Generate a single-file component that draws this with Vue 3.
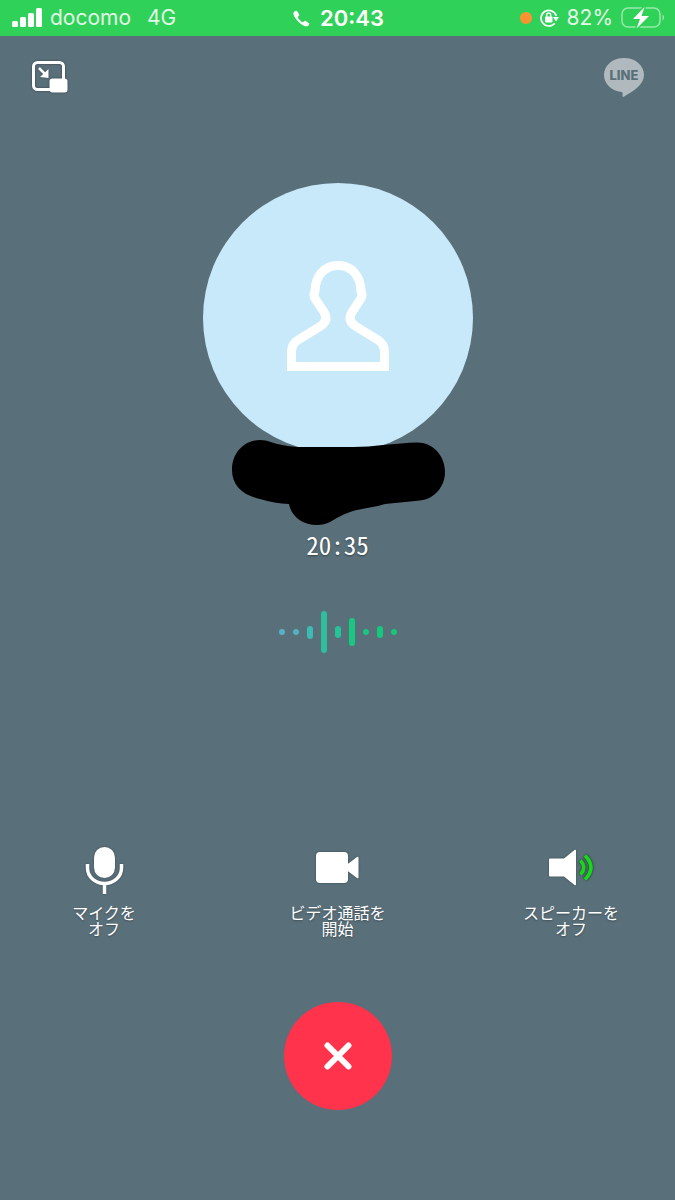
<script setup>
import { ref } from 'vue'

const carrier = ref('docomo')
const network = ref('4G')
const clock = ref('20:43')
const battery = ref(82)
const duration = ref('20:35')

// 音声波形のバー
const bars = [
  { height: 6, color: '#5aafca' },
  { height: 6, color: '#52b3c3' },
  { height: 13, color: '#3bbbb4' },
  { height: 42, color: '#2fbf9f' },
  { height: 12, color: '#22c498' },
  { height: 28, color: '#18c780' },
  { height: 6, color: '#18c680' },
  { height: 12, color: '#14c97c' },
  { height: 6, color: '#18c67c' },
]
</script>

<template>
  <div class="call">
    <header class="status-bar">
      <div class="status-left">
        <svg class="signal" width="30" height="20" viewBox="0 0 30 20" fill="#fff">
          <rect x="0" y="13" width="6" height="6" rx="1.5" />
          <rect x="8" y="9" width="6" height="10" rx="1.5" />
          <rect x="16" y="5" width="6" height="14" rx="1.5" />
          <rect x="24" y="0" width="6" height="19" rx="1.5" />
        </svg>
        <span>{{ carrier }}</span>
        <span class="network">{{ network }}</span>
      </div>
      <div class="status-center">
        <svg width="17" height="17" viewBox="0 0 17 17" fill="#fff">
          <path d="M1.2 1.8C2.2.6 3.6.3 4.300 1.300L6 4.200c.5.9.2 1.600-.8 2.400-.6.5-.5 1 0 1.700C6.400 10 7.500 11 9 11.900c.6.4 1 .4 1.500-.2.8-.9 1.500-1.200 2.300-.7l2.900 1.900c1 .7.7 1.900-.5 2.800C13.500 17 10.600 16.200 7 13.200 3.200 10 .9 6.600.5 4.300.3 3.300.6 2.500 1.200 1.800z" />
        </svg>
        <span class="clock">{{ clock }}</span>
      </div>
      <div class="status-right">
        <span class="recording-dot"></span>
        <svg width="19" height="20" viewBox="0 0 19 20">
          <path d="M14.800 15.200A7.800 7.800 0 1 1 16.300 8" fill="none" stroke="#fff" stroke-width="1.700" />
          <path d="M13 9h6l-3 4.500z" fill="#fff" />
          <rect x="5" y="8.500" width="7.500" height="6" rx="1" fill="#fff" />
          <path d="M6.700 9V7a2 2 0 0 1 4 0v2" fill="none" stroke="#fff" stroke-width="1.400" />
        </svg>
        <span class="percent">{{ battery }}%</span>
        <svg width="44" height="22" viewBox="0 0 44 22">
          <rect x="1" y="1" width="38" height="19" rx="6" fill="none" stroke="#98e9ab" stroke-width="1.500" />
          <path d="M41.500 7.500c2 .8 2 5.200 0 6z" fill="#98e9ab" />
          <path d="M23.500 0 12 12h7l-3.500 9.500L28 9h-7.500z" fill="#fff" stroke="#30d158" stroke-width="3" paint-order="stroke" />
        </svg>
      </div>
    </header>

    <nav class="toolbar">
      <button type="button" class="icon-button" aria-label="縮小">
        <svg width="38" height="36" viewBox="0 0 38 36">
          <rect x="2.500" y="2.500" width="30" height="27" rx="4" fill="none" stroke="#fff" stroke-width="3" />
          <path d="M8 8l6 6" stroke="#fff" stroke-width="2.500" />
          <path d="M17.500 18V9L9 17z" fill="#fff" />
          <rect x="18.500" y="18.500" width="18" height="14" rx="3" fill="#fff" />
        </svg>
      </button>
      <svg class="line-logo" width="42" height="42" viewBox="0 0 42 42">
        <path d="M21 1C9.500 1 1 8.500 1 18c0 8.600 7 15.500 17.300 17 1.400.2 1.500 1.200 1.200 3.200-.2 1.700.5 1.900 2 1C30 34.500 41 28 41 18 41 8.500 32.500 1 21 1z" fill="#b0b9be" />
        <text x="21" y="23" text-anchor="middle">LINE</text>
      </svg>
    </nav>

    <main class="profile">
      <div class="avatar">
        <svg width="102" height="110" viewBox="0 0 102 110">
          <path
            d="M4.500 105.500V91Q4.500 83 11 79L33 65.500Q42 60 37 51L28 37.500Q26 34 28 30C28.500 14 38 4.500 51 4.500S73.500 14 74 30Q76 34 74 37.500L65 51Q60 60 69 65.500L91 79Q97.500 83 97.500 91V105.500Z"
            fill="none"
            stroke="#fff"
            stroke-width="9"
          />
        </svg>
      </div>
      <svg class="name-mask" width="214" height="86" viewBox="0 0 214 86">
        <path d="M1 31C1 14 13 1 29 1c8 0 12 3 20 4.500 7 1.500 12 2.500 20 2.500h53c11 0 20-1 30-2 12-1 24-2.500 34-2.500 16 0 28 13 28 29.500 0 14-10 27-25 28.500l-35 3.500c-11 3.500-20 4-32 7-10 3-16 7-23 11-4 2-8 3-13 3-15 0-26-9-28-21-10-.5-19-2-29-5C11 56 1 46 1 31z" />
      </svg>
      <time class="duration">{{ duration }}</time>
      <div class="wave">
        <span
          v-for="(bar, i) in bars"
          :key="i"
          class="bar"
          :style="{ height: bar.height + 'px', background: bar.color }"
        ></span>
      </div>
    </main>

    <section class="controls">
      <button type="button" class="control">
        <svg width="52" height="52" viewBox="0 0 52 52">
          <rect x="16" y="4" width="21" height="31" rx="10.500" fill="#fff" />
          <path d="M9.500 21v4a17 15.500 0 0 0 34 0v-4M26.500 40.500V51" fill="none" stroke="#fff" stroke-width="3.500" />
        </svg>
        <span>マイクを<br />オフ</span>
      </button>
      <button type="button" class="control">
        <svg width="52" height="52" viewBox="0 0 52 52" fill="#fff">
          <rect x="5" y="9" width="32" height="31" rx="4" />
          <path d="M36 21.500l10-7.500q1.500-1 1.500 1v19q0 2-1.500 1l-10-7.500z" />
        </svg>
        <span>ビデオ通話を<br />開始</span>
      </button>
      <button type="button" class="control">
        <svg width="52" height="52" viewBox="0 0 52 52">
          <path d="M5 15.500h14L29.500 7q1.500-1 1.500 1v33q0 2-1.500 1L19 33.500H5q-1 0-1-1v-16q0-1 1-1z" fill="#fff" />
          <path d="M35.500 17.500q6.500 7 0 14M40 12.500q12 12 0 24" fill="none" stroke="#3c5a55" stroke-width="5" />
          <path d="M35.500 17.500q6.500 7 0 14M40 12.500q12 12 0 24" fill="none" stroke="#14dc14" stroke-width="3.500" />
        </svg>
        <span>スピーカーを<br />オフ</span>
      </button>
    </section>

    <button type="button" class="hang-up" aria-label="通話を終了">
      <svg width="28" height="28" viewBox="0 0 28 28">
        <path d="M3.500 3.500l21 21M24.500 3.500l-21 21" stroke="#fff" stroke-width="6" stroke-linecap="round" />
      </svg>
    </button>
  </div>
</template>

<style>
body {
  margin: 0;
  background: #596f79;
}
</style>

<style scoped>
.call {
  display: flex;
  flex-direction: column;
  box-sizing: border-box;
  min-height: 100vh;
  padding-bottom: 90px;
  background: #596f79;
  color: #fff;
  font-family: 'Noto Sans CJK JP', sans-serif;
}

svg {
  display: block;
  flex: none;
}

button {
  padding: 0;
  border: 0;
  background: none;
  color: inherit;
  font: inherit;
  cursor: pointer;
}

/* ステータスバー */
.status-bar {
  display: grid;
  grid-template-columns: 1fr auto 1fr;
  align-items: center;
  height: 36px;
  padding: 0 10px 0 12px;
  background: #30d158;
  font-family: Inter, sans-serif;
  font-size: 21px;
  line-height: 36px;
}

.status-left,
.status-center,
.status-right {
  display: flex;
  align-items: center;
}

.status-left {
  gap: 8px;
  color: #e2f9e7;
}

.network {
  margin-left: 8px;
}

.status-center {
  gap: 10px;
}

.clock {
  font-size: 22px;
  font-weight: 600;
}

.status-right {
  justify-content: flex-end;
  gap: 8px;
}

.recording-dot {
  width: 12px;
  height: 12px;
  border-radius: 50%;
  background: #ff9230;
}

.percent {
  color: #e2f9e7;
}

/* ツールバー */
.toolbar {
  display: flex;
  justify-content: space-between;
  align-items: center;
  padding: 21px 30px 0 31px;
}

.icon-button svg {
  filter: drop-shadow(0 0 1px rgba(0, 0, 0, 0.4));
}

.line-logo text {
  fill: #596f79;
  font-family: Inter, sans-serif;
  font-size: 13px;
  font-weight: 800;
}

/* 通話相手 */
.profile {
  display: flex;
  flex-direction: column;
  align-items: center;
  margin-top: 84px;
}

.avatar {
  display: flex;
  align-items: center;
  justify-content: center;
  box-sizing: border-box;
  width: 270px;
  height: 270px;
  padding-bottom: 4px;
  border-radius: 50%;
  background: #c8e9fa;
}

.name-mask {
  margin-top: -14px;
}

.duration {
  margin-top: 3px;
  font-size: 25px;
  line-height: 32px;
  font-feature-settings: 'hwid';
  text-shadow: 0 1px 2px rgba(0, 0, 0, 0.4);
}

.wave {
  display: flex;
  align-items: center;
  gap: 8px;
  height: 44px;
  margin-top: 50px;
}

.bar {
  width: 6px;
  border-radius: 3px;
}

/* 操作ボタン */
.controls {
  display: flex;
  justify-content: space-between;
  margin-top: auto;
  padding: 0 56px;
}

.control {
  display: flex;
  flex-direction: column;
  align-items: center;
  gap: 9px;
  min-width: 96px;
  font-size: 16px;
  line-height: 16px;
  text-shadow: 0 1px 2px rgba(0, 0, 0, 0.3);
}

.control svg {
  filter: drop-shadow(0 0 1px rgba(0, 0, 0, 0.3));
}

.hang-up {
  display: flex;
  align-items: center;
  justify-content: center;
  align-self: center;
  width: 108px;
  height: 108px;
  margin-top: 66px;
  border-radius: 50%;
  background: #ff334b;
}
</style>
